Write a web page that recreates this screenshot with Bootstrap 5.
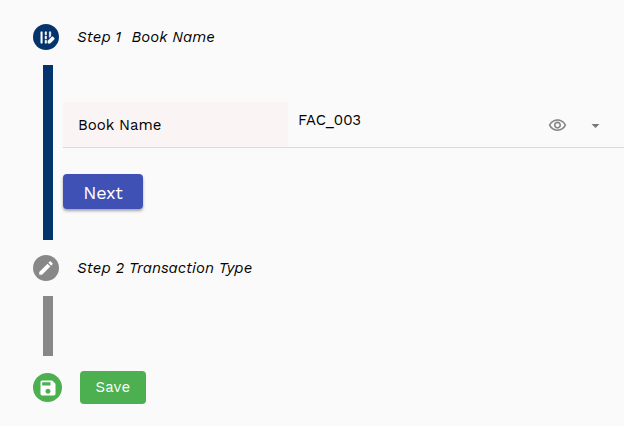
<!DOCTYPE html>
<html lang="en">
<head>
<meta charset="utf-8">
<meta name="viewport" content="width=device-width, initial-scale=1">
<title>Book setup</title>
<link href="https://cdn.jsdelivr.net/npm/bootstrap@5.3.0/dist/css/bootstrap.min.css" rel="stylesheet">
<style>
body{background:#fafafa;color:#000;font-family:"Work Sans",Inter,"Liberation Sans",sans-serif;font-size:15px;line-height:20px;overflow:hidden}
.stepper{padding:24px 0 0 33px}
.step-head{height:26px;gap:18px}
.dot{width:26px;height:26px;background:#888}
.dot.active{background:#04346c}
.dot.done{width:29px;height:29px;background:#4caf50}
.title{font-style:italic;letter-spacing:.07px;white-space:pre}
.bar{width:10px;margin-left:10px;background:#888;height:60px}
.bar.active{background:#04346c;height:175px}
.step-body{margin:15px 0;height:175px}
.step-body.short{height:60px;margin-bottom:15px}
.pane{margin-left:10px;padding-top:37px}
.field{height:46px;border-bottom:1px solid #d8dade}
.field-label{width:225px;background:#fbf4f4;padding-left:15px}
.field-value{padding:0 19px 9px 10px}
.field-icon{margin-top:10px}
.field-icon + .field-icon{margin-left:19px}
.btn-next{width:80px;height:35px;margin-top:26px;padding-top:2px!important;background:#3f51b5;color:#fff;font-size:18px;letter-spacing:-.2px;border-radius:4px;box-shadow:0 2px 3px rgba(0,0,0,.35)}
.btn-save{width:66px;height:33px;margin-left:18px;background:#4caf50;color:#fff;font-size:15px;font-weight:450;letter-spacing:.2px;border-radius:4px}
</style>
</head>
<body>
<main class="stepper">
  <div class="step-head d-flex align-items-center">
    <span class="dot active rounded-circle d-flex align-items-center justify-content-center">
      <svg width="17" height="17" viewBox="0 0 24 24" fill="#fff" stroke="#fff" stroke-width=".8"><path d="M18 4h-2v7.9l2-2zM4 4h2v16H4zM10 4h2v4h-2zm0 6h2v4h-2zm0 6h2v4h-2zM22.56 12.59l-1.15-1.15c-.59-.59-1.54-.59-2.12 0L14 16.73V20h3.27l5.29-5.29c.59-.58.59-1.53 0-2.12z"/></svg>
    </span>
    <span class="title">Step 1  Book Name</span>
  </div>
  <div class="step-body d-flex">
    <div class="bar active flex-shrink-0"></div>
    <div class="pane flex-grow-1">
      <div class="field d-flex">
        <div class="field-label d-flex align-items-center flex-shrink-0">Book Name</div>
        <div class="field-value d-flex flex-grow-1 align-items-center">
          <span class="me-auto">FAC_003</span>
          <svg class="field-icon" width="19" height="19" viewBox="0 0 24 24" fill="#858585"><path d="M12 6c3.79 0 7.17 2.13 8.82 5.5C19.17 14.87 15.79 17 12 17s-7.17-2.13-8.82-5.5C4.83 8.13 8.21 6 12 6m0-2C7 4 2.73 7.11 1 11.5 2.73 15.89 7 19 12 19s9.27-3.11 11-7.5C21.27 7.11 17 4 12 4zm0 5c1.38 0 2.5 1.12 2.5 2.5S13.38 14 12 14s-2.5-1.12-2.5-2.5S10.62 9 12 9m0-2c-2.48 0-4.5 2.02-4.5 4.5S9.52 16 12 16s4.5-2.02 4.5-4.5S14.48 7 12 7z"/></svg>
          <svg class="field-icon" width="19" height="19" viewBox="0 0 24 24" fill="#777"><path d="M7 10l5 5 5-5z"/></svg>
        </div>
      </div>
      <button type="button" class="btn btn-next border-0 p-0 d-flex align-items-center justify-content-center">Next</button>
    </div>
  </div>
  <div class="step-head d-flex align-items-center">
    <span class="dot rounded-circle d-flex align-items-center justify-content-center">
      <svg width="18" height="18" viewBox="0 0 24 24" fill="#fff"><path d="M3 17.25V21h3.75L17.81 9.94l-3.75-3.75L3 17.25zM20.71 7.04c.39-.39.39-1.02 0-1.41l-2.34-2.34c-.39-.39-1.02-.39-1.41 0l-1.83 1.83 3.75 3.75 1.83-1.83z"/></svg>
    </span>
    <span class="title">Step 2 Transaction Type</span>
  </div>
  <div class="step-body short d-flex"><div class="bar"></div></div>
  <div class="d-flex align-items-center">
    <span class="dot done rounded-circle d-flex align-items-center justify-content-center">
      <svg width="20" height="20" viewBox="0 0 24 24" fill="#fff"><path d="M17 3H5c-1.11 0-2 .9-2 2v14c0 1.1.89 2 2 2h14c1.1 0 2-.9 2-2V7l-4-4zm-5 16c-1.66 0-3-1.34-3-3s1.34-3 3-3 3 1.34 3 3-1.34 3-3 3zm3-10H5V5h10v4z"/></svg>
    </span>
    <button type="button" class="btn btn-save border-0 p-0 d-flex align-items-center justify-content-center">Save</button>
  </div>
</main>
</body>
</html>
